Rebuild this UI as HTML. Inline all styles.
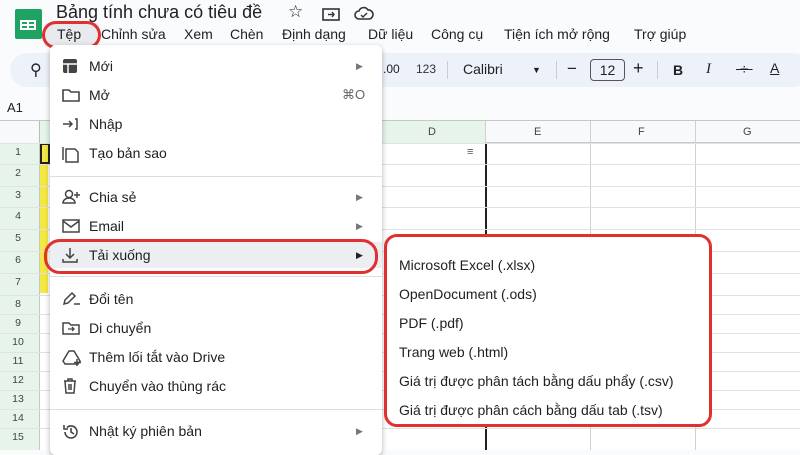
<!DOCTYPE html><html><head><meta charset="utf-8"><style>
*{margin:0;padding:0;box-sizing:border-box}
body{width:800px;height:450px;overflow:hidden;background:#f9fbfd;font-family:"Liberation Sans",sans-serif;color:#202124;position:relative}
.a{position:absolute;white-space:nowrap}
.mi{position:absolute;left:0;width:332px;height:26px;font-size:14px;line-height:26px}
.mi .tx{position:absolute;left:39px}
.mi .ar{position:absolute;left:306px;font-size:9px;color:#777}
.mi svg{position:absolute;left:12px;top:5px}
.sep{position:absolute;left:0;width:332px;height:1px;background:#ddd}
.sm{position:absolute;left:12px;font-size:14px}
</style></head><body>
<div class="a" style="left:15px;top:9px;width:27px;height:30px;background:#1ea362;border-radius:2px"></div>
<div class="a" style="left:20px;top:20px;width:16px;height:10px;border:2px solid #fff;background:#1ea362"></div>
<div class="a" style="left:27px;top:20px;width:2px;height:10px;background:#fff"></div>
<div class="a" style="left:20px;top:24px;width:16px;height:2px;background:#fff"></div>
<div class="a" style="left:56px;top:2px;font-size:18px;color:#202124">Bảng tính chưa có tiêu đề</div>
<div class="a" style="left:288px;top:2px;font-size:17px">☆</div>
<svg class="a" style="left:322px;top:7px" width="18" height="14"><rect x="1" y="2" width="16" height="11" fill="none" stroke="#333" stroke-width="1.6"/><path d="M6 7.5h6M10 5l2 2.5-2 2.5" stroke="#333" fill="none" stroke-width="1.4"/></svg>
<svg class="a" style="left:353px;top:6px" width="22" height="15"><path d="M6 13a4 4 0 0 1 0-8 5 5 0 0 1 9-1 4.5 4.5 0 0 1 1 9z" fill="none" stroke="#333" stroke-width="1.6"/><path d="M8 9l2 2 4-4" stroke="#333" fill="none" stroke-width="1.4"/></svg>
<div class="a" style="left:44px;top:23px;width:55px;height:24px;background:#e8eaed;border-radius:4px"></div>
<div class="a" style="left:42px;top:21px;width:59px;height:28px;border:3px solid #e03030;border-radius:14px"></div>
<div class="a" style="top:26px;font-size:14px;left:57px">Tệp</div>
<div class="a" style="top:26px;font-size:14px;left:101px">Chỉnh sửa</div>
<div class="a" style="top:26px;font-size:14px;left:184px">Xem</div>
<div class="a" style="top:26px;font-size:14px;left:230px">Chèn</div>
<div class="a" style="top:26px;font-size:14px;left:282px">Định dạng</div>
<div class="a" style="top:26px;font-size:14px;left:368px">Dữ liệu</div>
<div class="a" style="top:26px;font-size:14px;left:431px">Công cụ</div>
<div class="a" style="top:26px;font-size:14px;left:504px">Tiện ích mở rộng</div>
<div class="a" style="top:26px;font-size:14px;left:634px">Trợ giúp</div>
<div class="a" style="left:10px;top:53px;width:800px;height:34px;background:#edf2fa;border-radius:17px"></div>
<div class="a" style="left:30px;top:60px;font-size:16px">&#9906;</div>
<div class="a" style="left:383px;top:62px;font-size:12px">.00</div>
<div class="a" style="left:416px;top:62px;font-size:12px;color:#333">123</div>
<div class="a" style="left:447px;top:61px;width:1px;height:18px;background:#ccc"></div>
<div class="a" style="left:463px;top:61px;font-size:14px">Calibri</div>
<div class="a" style="left:532px;top:65px;font-size:9px">▼</div>
<div class="a" style="left:556px;top:61px;width:1px;height:18px;background:#ccc"></div>
<div class="a" style="left:567px;top:59px;font-size:17px">−</div>
<div class="a" style="left:590px;top:59px;width:35px;height:22px;border:1px solid #555;border-radius:4px;font-size:14px;text-align:center;line-height:20px">12</div>
<div class="a" style="left:633px;top:58px;font-size:18px">+</div>
<div class="a" style="left:657px;top:61px;width:1px;height:18px;background:#ccc"></div>
<div class="a" style="left:673px;top:62px;font-size:14px;font-weight:bold">B</div>
<div class="a" style="left:706px;top:61px;font-size:15px;font-style:italic;font-family:'Liberation Serif',serif">I</div>
<div class="a" style="left:736px;top:61px;font-size:15px;text-decoration:line-through">&nbsp;÷&nbsp;</div>
<div class="a" style="left:770px;top:60px;font-size:14px;text-decoration:underline">A</div>
<div class="a" style="left:7px;top:100px;font-size:13px">A1</div>
<div class="a" style="left:0;top:120px;width:800px;height:1px;background:#c7c7c7"></div>
<div class="a" style="left:0;top:121px;width:800px;height:329px;background:#fff"></div>
<div class="a" style="left:0;top:121px;width:800px;height:22px;background:#f8f9fa;border-bottom:1px solid #c7c7c7"></div>
<div class="a" style="left:0;top:121px;width:40px;height:329px;background:#e6f4ea;border-right:1px solid #c7c7c7"></div>
<div class="a" style="left:0;top:121px;width:40px;height:22px;background:#f8f9fa;border-right:1px solid #bbb"></div>
<div class="a" style="left:40px;top:121px;width:445px;height:22px;background:#e6f4ea"></div>
<div class="a" style="left:428px;top:126px;font-size:11px;color:#444">D</div>
<div class="a" style="left:534px;top:126px;font-size:11px;color:#444">E</div>
<div class="a" style="left:638px;top:126px;font-size:11px;color:#444">F</div>
<div class="a" style="left:743px;top:126px;font-size:11px;color:#444">G</div>
<div class="a" style="left:485px;top:121px;width:1px;height:329px;background:#d0d0d0"></div>
<div class="a" style="left:485px;top:143px;width:1.5px;height:307px;background:#222"></div>
<div class="a" style="left:590px;top:121px;width:1px;height:329px;background:#d0d0d0"></div>
<div class="a" style="left:695px;top:121px;width:1px;height:329px;background:#d0d0d0"></div>
<div class="a" style="left:40px;top:143px;width:8px;height:150px;background:#f4e842"></div>
<div class="a" style="left:40px;top:143px;width:10px;height:21px;border:2px solid #222;background:#f4e842"></div>
<div class="a" style="left:467px;top:146px;font-size:11px;color:#555">&#8801;</div>
<div id="rows"></div>
<script>
var ys=[143,164,186,207,229,251,273,295,314,333,352,371,390,409,428,447];
var h='';for(var i=0;i<15;i++){h+='<div class="a" style="left:0;top:'+ys[i]+'px;width:800px;height:1px;background:#e2e2e2"></div><div class="a" style="left:0;top:'+(ys[i]+3)+'px;width:36px;text-align:center;font-size:10.5px;color:#444">'+(i+1)+'</div>';}
document.getElementById('rows').innerHTML=h;
</script>
<div class="a" style="left:50px;top:45px;width:332px;height:410px;background:#fff;border-radius:6px;box-shadow:0 2px 6px rgba(0,0,0,.3)">
<div class="mi" style="top:8px"><svg width="16" height="16"><rect x="1" y="1" width="14" height="14" rx="2" fill="#444"/><path d="M1 6h14M6 6v9" stroke="#fff" stroke-width="1.5"/></svg><span class="tx">Mới</span><span class="ar">▶</span></div>
<div class="mi" style="top:37px"><svg width="18" height="16"><path d="M1 3h6l2 2h8v9H1z" fill="none" stroke="#444" stroke-width="1.6"/></svg><span class="tx">Mở</span><span class="a" style="left:292px;font-size:13px;color:#666">⌘O</span></div>
<div class="mi" style="top:66px"><svg width="18" height="16"><path d="M1 8h9M7 5l3 3-3 3M13 3h2v10h-2" fill="none" stroke="#444" stroke-width="1.5"/></svg><span class="tx">Nhập</span></div>
<div class="mi" style="top:95px"><svg width="18" height="18"><path d="M4 4h9l3 3v10H4z" fill="none" stroke="#444" stroke-width="1.5"/><path d="M1 2v13" stroke="#444" stroke-width="1.5"/></svg><span class="tx">Tạo bản sao</span></div>
<div class="sep" style="top:131px"></div>
<div class="mi" style="top:139px"><svg width="20" height="16"><circle cx="7" cy="5" r="3.5" fill="none" stroke="#444" stroke-width="1.5"/><path d="M1 14a6 5 0 0 1 12 0z M15 3v6M12 6h6" fill="none" stroke="#444" stroke-width="1.5"/></svg><span class="tx">Chia sẻ</span><span class="ar">▶</span></div>
<div class="mi" style="top:168px"><svg width="18" height="16"><rect x="1" y="2" width="16" height="12" fill="none" stroke="#444" stroke-width="1.5"/><path d="M1 3l8 6 8-6" fill="none" stroke="#444" stroke-width="1.5"/></svg><span class="tx">Email</span><span class="ar">▶</span></div>
<div class="mi" style="top:197px;background:#eceef1"><svg width="16" height="16"><path d="M8 1v10M4 7l4 4 4-4M1 12v3h14v-3" fill="none" stroke="#444" stroke-width="1.5"/></svg><span class="tx">Tải xuống</span><span class="ar" style="color:#222">▶</span></div>
<div class="sep" style="top:231px"></div>
<div class="mi" style="top:241px"><svg width="20" height="16"><path d="M2 13l1-4 7-7 3 3-7 7z M12 13h6" fill="none" stroke="#444" stroke-width="1.5"/></svg><span class="tx">Đổi tên</span></div>
<div class="mi" style="top:270px"><svg width="18" height="16"><path d="M1 3h6l2 2h8v9H1z" fill="none" stroke="#444" stroke-width="1.5"/><path d="M6 9h6M10 7l2 2-2 2" stroke="#444" fill="none" stroke-width="1.3"/></svg><span class="tx">Di chuyển</span></div>
<div class="mi" style="top:299px"><svg width="20" height="18"><path d="M7 2h5l6 10-2 3H3L1 12z" fill="none" stroke="#444" stroke-width="1.5"/><path d="M15 10v7M12 13.5h7" stroke="#444" stroke-width="1.5"/></svg><span class="tx">Thêm lối tắt vào Drive</span></div>
<div class="mi" style="top:328px"><svg width="16" height="16"><path d="M2 3h12M6 3V1h4v2M3 3l1 12h8l1-12M7 6v6M9 6v6" fill="none" stroke="#444" stroke-width="1.5"/></svg><span class="tx">Chuyển vào thùng rác</span></div>
<div class="sep" style="top:364px"></div>
<div class="mi" style="top:373px"><svg width="18" height="18"><path d="M3 9a6 6 0 1 0 2-4.5M2 2v4h4M9 5v4l3 2" fill="none" stroke="#444" stroke-width="1.6"/></svg><span class="tx">Nhật ký phiên bản</span><span class="ar">▶</span></div>
</div>
<div class="a" style="left:44px;top:239px;width:334px;height:35px;border:3px solid #e03030;border-radius:16px"></div>
<div class="a" style="left:384px;top:234px;width:328px;height:193px;background:#fff;border:3px solid #e03030;border-radius:13px">
<div class="sm" style="top:20px">Microsoft Excel (.xlsx)</div>
<div class="sm" style="top:49px">OpenDocument (.ods)</div>
<div class="sm" style="top:78px">PDF (.pdf)</div>
<div class="sm" style="top:107px">Trang web (.html)</div>
<div class="sm" style="top:136px">Giá trị được phân tách bằng dấu phẩy (.csv)</div>
<div class="sm" style="top:165px">Giá trị được phân cách bằng dấu tab (.tsv)</div>
</div>
</body></html>
